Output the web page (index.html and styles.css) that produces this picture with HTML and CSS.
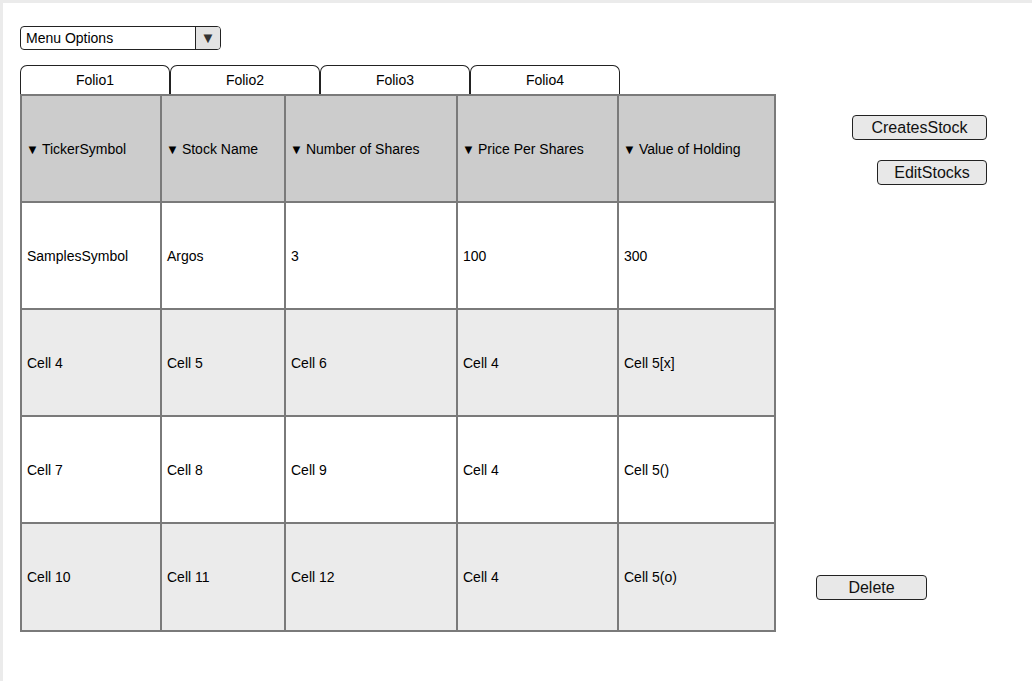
FILE: index.html
```html
<!DOCTYPE html>
<html>
<head>
<meta charset="utf-8">
<link rel="stylesheet" href="styles.css">
</head>
<body>
<div class="frame">
  <div class="main">
    <div class="left">
      <div class="select">
        <span class="select-label">Menu Options</span>
        <span class="select-arrow">▼</span>
      </div>
      <div class="tabs">
        <div class="tab">Folio1</div>
        <div class="tab">Folio2</div>
        <div class="tab">Folio3</div>
        <div class="tab">Folio4</div>
      </div>
      <table class="grid">
        <colgroup>
          <col class="c1"><col class="c2"><col class="c3"><col class="c4"><col class="c5">
        </colgroup>
        <thead>
          <tr>
            <th><span class="sort">▼</span>TickerSymbol</th>
            <th><span class="sort">▼</span>Stock Name</th>
            <th><span class="sort">▼</span>Number of Shares</th>
            <th><span class="sort">▼</span>Price Per Shares</th>
            <th><span class="sort">▼</span>Value of Holding</th>
          </tr>
        </thead>
        <tbody>
          <tr><td>SamplesSymbol</td><td>Argos</td><td>3</td><td>100</td><td>300</td></tr>
          <tr class="alt"><td>Cell 4</td><td>Cell 5</td><td>Cell 6</td><td>Cell 4</td><td>Cell 5[x]</td></tr>
          <tr><td>Cell 7</td><td>Cell 8</td><td>Cell 9</td><td>Cell 4</td><td>Cell 5()</td></tr>
          <tr class="alt last"><td>Cell 10</td><td>Cell 11</td><td>Cell 12</td><td>Cell 4</td><td>Cell 5(o)</td></tr>
        </tbody>
      </table>
    </div>
    <div class="right">
      <button class="btn btn-create">CreatesStock</button>
      <button class="btn btn-edit">EditStocks</button>
      <button class="btn btn-delete">Delete</button>
    </div>
  </div>
</div>
</body>
</html>
```
FILE: styles.css
```css
html, body {
  margin: 0;
  padding: 0;
  background: #ffffff;
}
body {
  font-family: "Liberation Sans", Arial, sans-serif;
  font-size: 14px;
  color: #000;
}
.frame {
  box-sizing: border-box;
  width: 1032px;
  height: 681px;
  border-top: 3px solid #ebebeb;
  border-left: 3px solid #ebebeb;
  padding: 23px 0 0 17px;
}
.main {
  display: flex;
  align-items: stretch;
}
.left {
  display: flex;
  flex-direction: column;
  width: 755px;
}
.select {
  box-sizing: border-box;
  width: 201px;
  height: 24px;
  border: 1px solid #222;
  border-radius: 4px;
  display: flex;
  overflow: hidden;
}
.select-label {
  flex: 1;
  padding-left: 5px;
  line-height: 22px;
  font-size: 14px;
}
.select-arrow {
  width: 24px;
  background: #e3e3e3;
  border-left: 1px solid #222;
  text-align: center;
  font-size: 15px;
  line-height: 22px;
  color: #333;
}
.tabs {
  display: flex;
  margin-top: 15px;
}
.tab {
  box-sizing: border-box;
  width: 150px;
  height: 29px;
  border: 1px solid #222;
  border-bottom: none;
  border-radius: 7px 7px 0 0;
  text-align: center;
  line-height: 28px;
  font-size: 14px;
  background: #fff;
}
.grid {
  border-collapse: collapse;
  table-layout: fixed;
  width: 754px;
}
.c1 { width: 140px; }
.c2 { width: 124px; }
.c3 { width: 172px; }
.c4 { width: 161px; }
.c5 { width: 157px; }
.grid th, .grid td {
  border: 2px solid #7a7a7a;
  height: 105px;
  padding: 0 0 0 5px;
  text-align: left;
  vertical-align: middle;
  font-weight: normal;
  font-size: 14px;
  white-space: nowrap;
}
.grid thead th {
  background: #cccccc;
}
.grid tr.last td {
  height: 106px;
}
.sort {
  display: inline-block;
  font-size: 13px;
  margin-left: -1px;
  margin-right: 3px;
}
.grid tr.alt td {
  background: #ebebeb;
}
.right {
  flex: 1;
  display: flex;
  flex-direction: column;
  align-items: flex-end;
  padding: 89px 45px 32px 0;
}
.btn {
  box-sizing: border-box;
  height: 25px;
  border: 1px solid #222;
  border-radius: 4px;
  background: #e8e8e8;
  font-family: "Liberation Sans", Arial, sans-serif;
  font-size: 16px;
  color: #111;
  padding: 0;
}
.btn-create {
  width: 135px;
}
.btn-edit {
  width: 110px;
  margin-top: 20px;
}
.btn-delete {
  width: 111px;
  margin-top: auto;
  margin-right: 60px;
}
```
